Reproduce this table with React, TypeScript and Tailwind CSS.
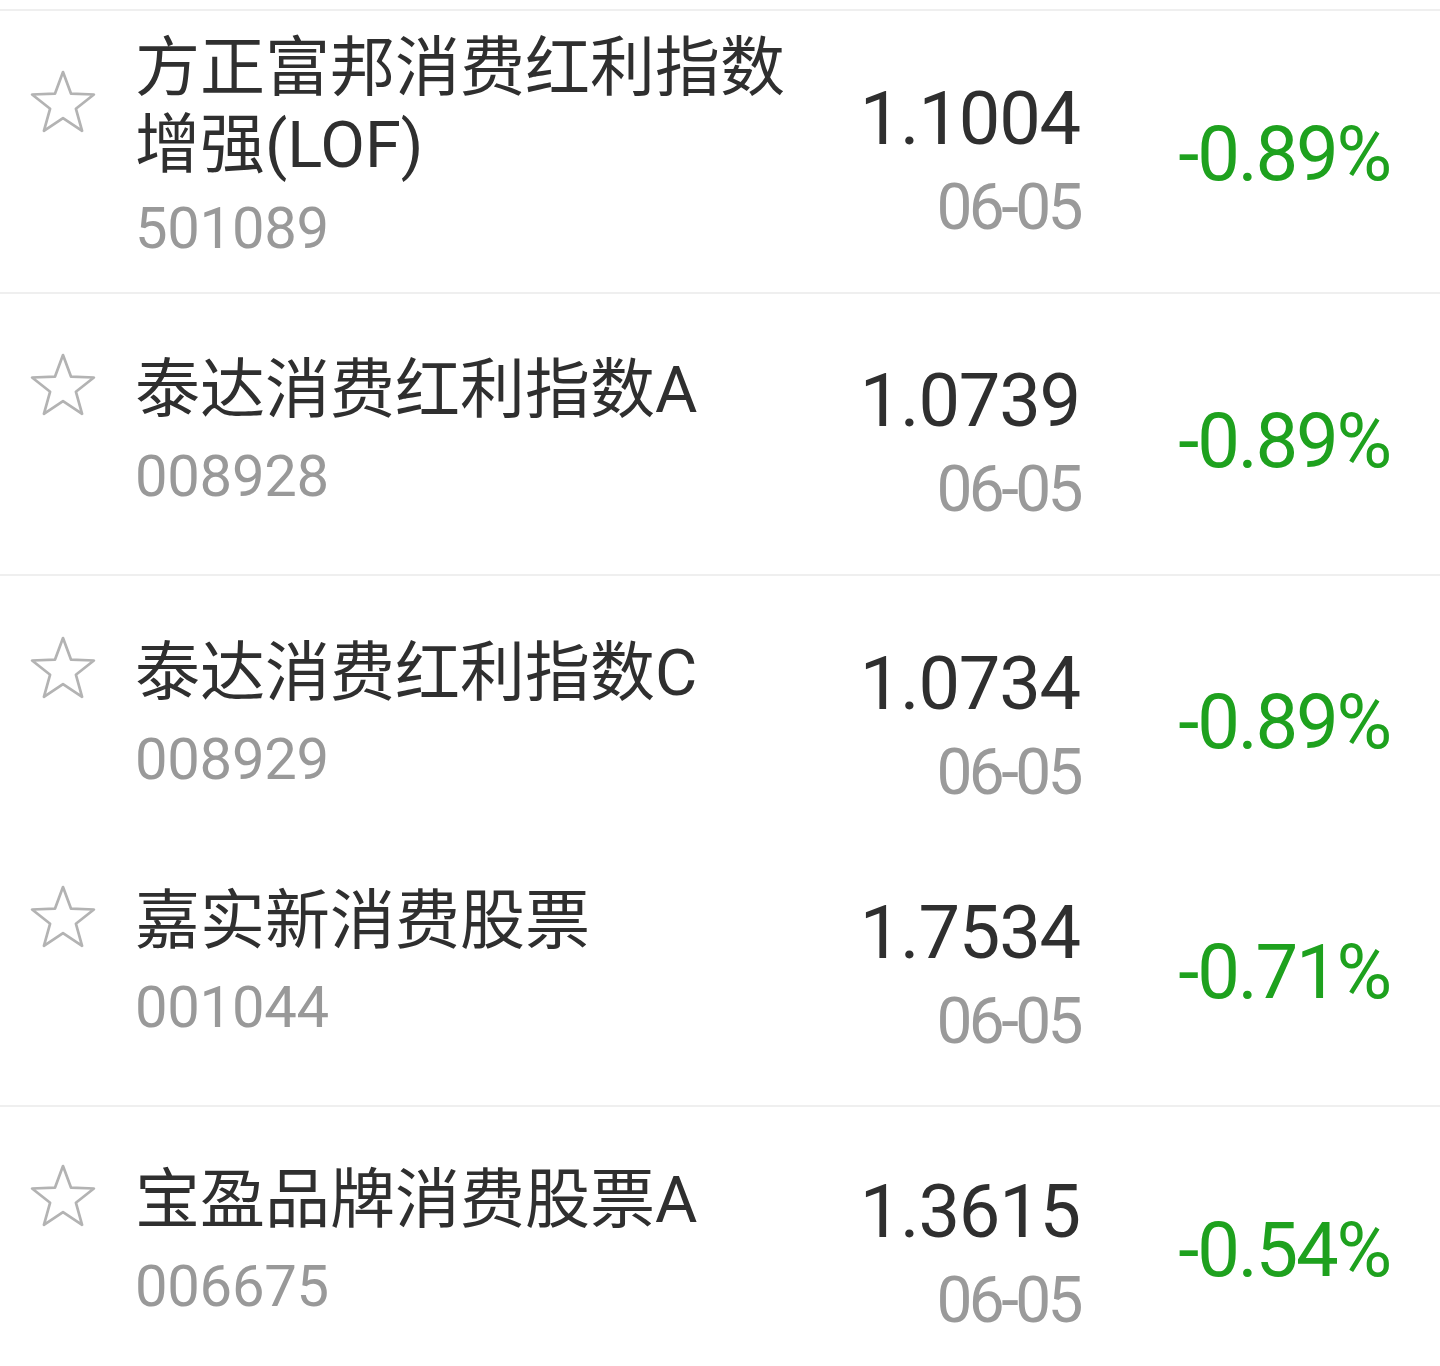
import React from "react";

type Row = {
  name: string;
  code: string;
  value: string;
  pct: string;
  rowCls: string;
  namePad: string;
  codeMt: string;
  valuePad: string;
  pctPad: string;
  starPad: string;
};

const rows: Row[] = [
  {
    name: "方正富邦消费红利指数增强(LOF)",
    code: "501089",
    value: "1.1004",
    pct: "-0.89%",
    rowCls: "h-[283px] border-b-2 border-[#efefef]",
    namePad: "pt-[19px]",
    codeMt: "mt-[14px]",
    valuePad: "pt-[68px]",
    pctPad: "pt-[103px]",
    starPad: "pt-[59px]",
  },
  {
    name: "泰达消费红利指数A",
    code: "008928",
    value: "1.0739",
    pct: "-0.89%",
    rowCls: "h-[282px] border-b-2 border-[#efefef]",
    namePad: "pt-[58px]",
    codeMt: "mt-[17px]",
    valuePad: "pt-[67px]",
    pctPad: "pt-[107px]",
    starPad: "pt-[59px]",
  },
  {
    name: "泰达消费红利指数C",
    code: "008929",
    value: "1.0734",
    pct: "-0.89%",
    rowCls: "h-[248px]",
    namePad: "pt-[59px]",
    codeMt: "mt-[17px]",
    valuePad: "pt-[68px]",
    pctPad: "pt-[106px]",
    starPad: "pt-[60px]",
  },
  {
    name: "嘉实新消费股票",
    code: "001044",
    value: "1.7534",
    pct: "-0.71%",
    rowCls: "h-[283px] border-b-2 border-[#efefef]",
    namePad: "pt-[59px]",
    codeMt: "mt-[17px]",
    valuePad: "pt-[69px]",
    pctPad: "pt-[108px]",
    starPad: "pt-[61px]",
  },
  {
    name: "宝盈品牌消费股票A",
    code: "006675",
    value: "1.3615",
    pct: "-0.54%",
    rowCls: "h-[258px]",
    namePad: "pt-[55px]",
    codeMt: "mt-[17px]",
    valuePad: "pt-[65px]",
    pctPad: "pt-[103px]",
    starPad: "pt-[57px]",
  },
];

function Star() {
  return (
    <svg width="68" height="65" viewBox="0 0 100 96" className="ml-[29px]">
      <path
        d="M50,3 L61.76,34.82 L95.65,36.17 L69.02,57.18 L78.2,89.8 L50,71 L21.8,89.8 L30.98,57.18 L4.35,36.17 L38.24,34.82 Z"
        fill="none"
        stroke="#b3b3b3"
        strokeWidth="4"
        strokeLinejoin="round"
      />
    </svg>
  );
}

export default function App() {
  return (
    <div className="w-[1440px] h-[1366px] overflow-hidden bg-white">
      <div className="h-[11px] border-b-2 border-[#efefef]" />
      {rows.map((r) => (
        <div key={r.code} className={`flex items-start ${r.rowCls}`}>
          <div className={`w-[135px] shrink-0 ${r.starPad}`}>
            <Star />
          </div>
          <div className={`w-[690px] shrink-0 ${r.namePad}`}>
            <div className="text-[65px] leading-[77px] text-[#2f2f2f] [font-family:Roboto,'Noto_Sans_CJK_SC',sans-serif]">
              {r.name}
            </div>
            <div className={`${r.codeMt} text-[58px] leading-[60px] tracking-[-0.3px] text-[#999999] [font-family:Roboto,sans-serif]`}>
              {r.code}
            </div>
          </div>
          <div className={`w-[255px] shrink-0 text-right ${r.valuePad} [font-family:Roboto,sans-serif]`}>
            <div className="text-[74px] leading-[80px] tracking-[-1.2px] text-[#2f2f2f]">
              {r.value}
            </div>
            <div className="mt-[16px] text-[64px] leading-[66px] tracking-[-3.6px] text-[#9a9a9a]">
              06-05
            </div>
          </div>
          <div className={`flex-1 text-right pr-[50px] ${r.pctPad} [font-family:Roboto,sans-serif]`}>
            <div className="text-[76px] leading-[80px] tracking-[-2.2px] text-[#1ea11e]">
              {r.pct}
            </div>
          </div>
        </div>
      ))}
    </div>
  );
}
